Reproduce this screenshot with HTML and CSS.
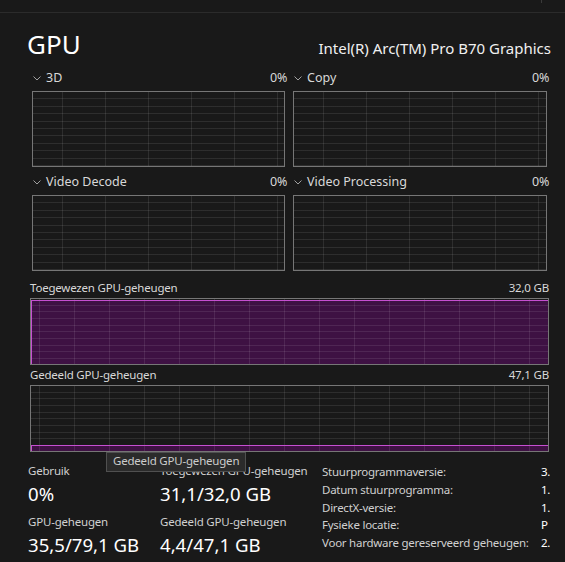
FILE: index.html
```html
<!DOCTYPE html>
<html lang="nl">
<head>
<meta charset="utf-8">
<title>GPU</title>
<link rel="stylesheet" href="styles.css">
</head>
<body>
<div class="topbar"><span class="topbar-tick"></span></div>
<header class="header">
  <h1 class="title">GPU</h1>
  <div class="device">Intel(R) Arc(TM) Pro B70 Graphics</div>
</header>

<section class="engines">
  <div class="engine">
    <div class="engine-head">
      <svg class="chev" viewBox="0 0 8 5"><polyline points="0.5,0.5 4,4 7.5,0.5"/></svg>
      <span class="engine-name">3D</span><span class="engine-pct">0%</span>
    </div>
    <div class="engine-graph"></div>
  </div>
  <div class="engine">
    <div class="engine-head">
      <svg class="chev" viewBox="0 0 8 5"><polyline points="0.5,0.5 4,4 7.5,0.5"/></svg>
      <span class="engine-name">Copy</span><span class="engine-pct">0%</span>
    </div>
    <div class="engine-graph"></div>
  </div>
  <div class="engine">
    <div class="engine-head">
      <svg class="chev" viewBox="0 0 8 5"><polyline points="0.5,0.5 4,4 7.5,0.5"/></svg>
      <span class="engine-name">Video Decode</span><span class="engine-pct">0%</span>
    </div>
    <div class="engine-graph"></div>
  </div>
  <div class="engine">
    <div class="engine-head">
      <svg class="chev" viewBox="0 0 8 5"><polyline points="0.5,0.5 4,4 7.5,0.5"/></svg>
      <span class="engine-name">Video Processing</span><span class="engine-pct">0%</span>
    </div>
    <div class="engine-graph"></div>
  </div>
</section>

<section class="memory">
  <div class="mem-head"><span>Toegewezen GPU-geheugen</span><span>32,0 GB</span></div>
  <div class="mem-graph fill-high"></div>
  <div class="mem-head mem-head-next"><span>Gedeeld GPU-geheugen</span><span>47,1 GB</span></div>
  <div class="mem-graph fill-low"></div>
</section>

<section class="stats">
  <div class="stat-col">
    <div class="stat">
      <div class="stat-label">Gebruik</div>
      <div class="stat-value">0%</div>
    </div>
    <div class="stat stat-next">
      <div class="stat-label">GPU-geheugen</div>
      <div class="stat-value">35,5/79,1 GB</div>
    </div>
  </div>
  <div class="stat-col">
    <div class="stat">
      <div class="stat-label">Toegewezen GPU-geheugen</div>
      <div class="stat-value">31,1/32,0 GB</div>
    </div>
    <div class="stat stat-next">
      <div class="stat-label">Gedeeld GPU-geheugen</div>
      <div class="stat-value">4,4/47,1 GB</div>
    </div>
  </div>
  <div class="info">
    <div class="info-row"><span class="info-label">Stuurprogrammaversie:</span><span class="info-value">3.</span></div>
    <div class="info-row"><span class="info-label">Datum stuurprogramma:</span><span class="info-value">1.</span></div>
    <div class="info-row"><span class="info-label">DirectX-versie:</span><span class="info-value">1.</span></div>
    <div class="info-row"><span class="info-label">Fysieke locatie:</span><span class="info-value">P</span></div>
    <div class="info-row"><span class="info-label">Voor hardware gereserveerd geheugen:</span><span class="info-value">2.</span></div>
  </div>
</section>

<div class="tooltip">Gedeeld GPU-geheugen</div>
</body>
</html>
```
FILE: styles.css
```css
* { box-sizing: border-box; }
html, body { margin: 0; padding: 0; }
body {
  width: 565px;
  height: 562px;
  overflow: hidden;
  position: relative;
  background: #191919;
  color: #ffffff;
  font-family: "Noto Sans", "Open Sans", sans-serif;
}

.topbar {
  height: 13px;
  border-bottom: 1px solid #2b2b2b;
  display: flex;
  justify-content: flex-end;
  padding-right: 23px;
}
.topbar-tick { width: 1px; height: 3px; background: #3a3a3a; }

.header {
  display: flex;
  justify-content: space-between;
  align-items: baseline;
  margin-top: 16px;
  padding: 0 14px 0 27px;
}
.title { margin: 0; font-size: 26px; line-height: 30px; font-weight: 400; }
.device { font-size: 15px; line-height: 20px; color: #f0f0f0; }

.engines {
  display: grid;
  grid-template-columns: 253px 254px;
  column-gap: 8px;
  row-gap: 7px;
  margin: 11px 0 0 32px;
}
.engine-head {
  display: flex;
  align-items: center;
  height: 16px;
  margin-bottom: 5px;
  font-size: 12.5px;
  line-height: 16px;
  color: #d8d8d8;
}
.chev { width: 8px; height: 5px; margin: 0 5px 0 1px; fill: none; stroke: #a0a0a0; stroke-width: 1; }
.engine-name { flex: 1; }
.engine-pct { margin-right: -2px; letter-spacing: -0.3px; }
.engine-graph {
  height: 76px;
  border: 1px solid #767676;
  background-color: #191919;
  background-image:
    linear-gradient(to right, rgba(255,255,255,0.09) 1px, transparent 1px),
    repeating-linear-gradient(to bottom, transparent 0, transparent 6.4px, rgba(255,255,255,0.09) 6.4px, rgba(255,255,255,0.09) 7.4px);
  background-size: 43px 100%, 100% 100%;
  background-position: 29px 0, 0 0;
  background-repeat: repeat-x, no-repeat;
}

.memory { margin: 9px 16px 0 30px; }
.mem-head {
  display: flex;
  justify-content: space-between;
  height: 16px;
  margin-bottom: 2px;
  font-size: 11.5px;
  letter-spacing: -0.2px;
  line-height: 16px;
  color: #d8d8d8;
}
.mem-head-next { margin-top: 2px; }
.mem-graph {
  height: 67px;
  border: 1px solid #767676;
  background-color: #191919;
  background-repeat: no-repeat;
}
.fill-high {
  background-image:
    linear-gradient(#c64fd1, #c64fd1),
    linear-gradient(#c64fd1, #c64fd1),
    linear-gradient(to right, rgba(255,255,255,0.09) 1px, transparent 1px),
    repeating-linear-gradient(to bottom, transparent 0, transparent 5.67px, rgba(255,255,255,0.09) 5.67px, rgba(255,255,255,0.09) 6.67px),
    linear-gradient(#3e1143, #3e1143);
  background-size: 100% 1px, 1px 64px, 35px 100%, 100% 100%, 100% 64px;
  background-position: 0 1px, 0 1px, 8px 0, 0 0, 0 1px;
  background-repeat: no-repeat, no-repeat, repeat-x, no-repeat, no-repeat;
}
.fill-low {
  background-image:
    linear-gradient(#c64fd1, #c64fd1),
    linear-gradient(#c64fd1, #c64fd1),
    linear-gradient(to right, rgba(255,255,255,0.09) 1px, transparent 1px),
    repeating-linear-gradient(to bottom, transparent 0, transparent 5.67px, rgba(255,255,255,0.09) 5.67px, rgba(255,255,255,0.09) 6.67px),
    linear-gradient(#3e1143, #3e1143);
  background-size: 100% 1px, 1px 6px, 35px 100%, 100% 100%, 100% 6px;
  background-position: 0 59px, 0 59px, 8px 0, 0 0, 0 59px;
  background-repeat: no-repeat, no-repeat, repeat-x, no-repeat, no-repeat;
}

.stats {
  display: grid;
  grid-template-columns: 132px 162px 1fr;
  margin: 11px 0 0 28px;
}
.stat-next { margin-top: 8px; }
.stat-label { font-size: 11.5px; letter-spacing: -0.2px; line-height: 16px; color: #d0d0d0; white-space: nowrap; }
.stat-value { margin-top: 3px; font-size: 18.6px; line-height: 24px; color: #ffffff; white-space: nowrap; }

.info { margin-top: 0; }
.info-row { display: flex; font-size: 11.5px; letter-spacing: -0.25px; line-height: 17.8px; white-space: nowrap; }
.info-label { width: 219px; color: #d0d0d0; }
.info-value { width: 9px; overflow: hidden; color: #ffffff; }

.tooltip {
  position: absolute;
  left: 106px;
  top: 452px;
  width: 140px;
  height: 20px;
  padding: 0 6px;
  background: #2b2b2b;
  border: 1px solid #505050;
  color: #cccccc;
  font-size: 11.5px;
  letter-spacing: -0.2px;
  line-height: 16px;
  white-space: nowrap;
}
```
